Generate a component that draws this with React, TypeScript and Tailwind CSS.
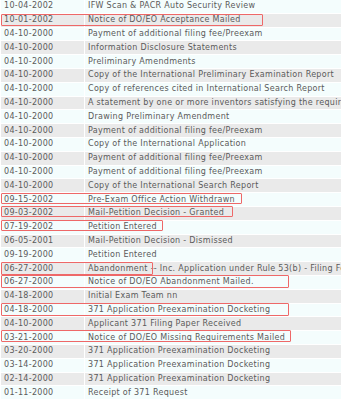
const rows: [string, string][] = [
  ["10-04-2002", "IFW Scan & PACR Auto Security Review"],
  ["10-01-2002", "Notice of DO/EO Acceptance Mailed"],
  ["04-10-2000", "Payment of additional filing fee/Preexam"],
  ["04-10-2000", "Information Disclosure Statements"],
  ["04-10-2000", "Preliminary Amendments"],
  ["04-10-2000", "Copy of the International Preliminary Examination Report"],
  ["04-10-2000", "Copy of references cited in International Search Report"],
  ["04-10-2000", "A statement by one or more inventors satisfying the requirement"],
  ["04-10-2000", "Drawing Preliminary Amendment"],
  ["04-10-2000", "Payment of additional filing fee/Preexam"],
  ["04-10-2000", "Copy of the International Application"],
  ["04-10-2000", "Payment of additional filing fee/Preexam"],
  ["04-10-2000", "Payment of additional filing fee/Preexam"],
  ["04-10-2000", "Copy of the International Search Report"],
  ["09-15-2002", "Pre-Exam Office Action Withdrawn"],
  ["09-03-2002", "Mail-Petition Decision - Granted"],
  ["07-19-2002", "Petition Entered"],
  ["06-05-2001", "Mail-Petition Decision - Dismissed"],
  ["09-19-2000", "Petition Entered"],
  ["06-27-2000", "Abandonment -- Inc. Application under Rule 53(b) - Filing Fee"],
  ["06-27-2000", "Notice of DO/EO Abandonment Mailed."],
  ["04-18-2000", "Initial Exam Team nn"],
  ["04-18-2000", "371 Application Preexamination Docketing"],
  ["04-10-2000", "Applicant 371 Filing Paper Received"],
  ["03-21-2000", "Notice of DO/EO Missing Requirements Mailed"],
  ["03-20-2000", "371 Application Preexamination Docketing"],
  ["03-14-2000", "371 Application Preexamination Docketing"],
  ["02-14-2000", "371 Application Preexamination Docketing"],
  ["01-11-2000", "Receipt of 371 Request"],
];

// hand-drawn red annotation boxes: [top, left, width, height]
const marks: [number, number, number, number][] = [
  [14, 1, 262, 12],
  [193, 1, 241, 11],
  [206, 1, 232, 11],
  [220, 1, 162, 11],
  [262, 1, 152, 13],
  [275, 1, 288, 13],
  [303, 1, 288, 13],
  [330, 1, 290, 12],
];

export default function App() {
  return (
    <div className="relative w-[341px] h-[400px] overflow-hidden bg-white">
      <div className="w-[480px] flex flex-col font-['DejaVu_Sans',sans-serif] text-[8px] tracking-[0.3px] text-[#5a5a5a]">
        {rows.map(([date, desc], i) => (
          <div
            key={i}
            className={`flex h-[13.8px] items-center border-b border-white ${
              i % 2 === 0 ? "bg-[#f4fdfd]" : "bg-[#eaeaea]"
            }`}
          >
            <div className="w-[85px] shrink-0 h-full flex items-center pl-[3px] border-r border-white border-l">
              {date}
            </div>
            <div className="flex-1 h-full flex items-center pl-[3px] whitespace-nowrap">
              {desc}
            </div>
          </div>
        ))}
      </div>
      {marks.map(([t, l, w, h], i) => (
        <div
          key={i}
          className="absolute border border-[#ee6868] rounded-[1px]"
          style={{ top: t, left: l, width: w, height: h }}
        />
      ))}
    </div>
  );
}
